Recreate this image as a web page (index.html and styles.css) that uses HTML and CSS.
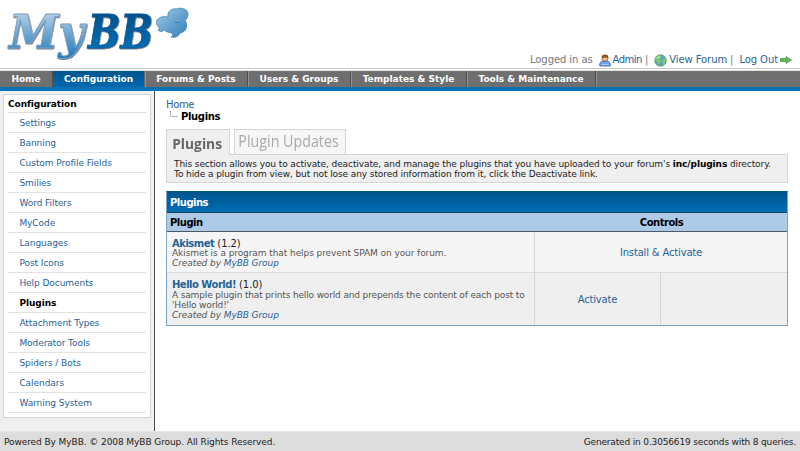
FILE: index.html
```html
<!DOCTYPE html>
<html lang="en">
<head>
<meta charset="utf-8">
<title>Plugins</title>
<link rel="stylesheet" href="styles.css">
</head>
<body>
<header class="header">
  <svg class="logo" width="200" height="68" viewBox="0 0 200 68" role="img" aria-label="MyBB">
    <defs>
      <linearGradient id="light" gradientUnits="userSpaceOnUse" x1="0" y1="13" x2="0" y2="58"><stop offset="0" stop-color="#b5cfe7"/><stop offset="1" stop-color="#1b78be"/></linearGradient>
      <linearGradient id="dark" gradientUnits="userSpaceOnUse" x1="0" y1="13" x2="0" y2="49"><stop offset="0" stop-color="#00508a"/><stop offset="1" stop-color="#0070b8"/></linearGradient>
      <linearGradient id="bubble" x1="0" y1="0" x2="1" y2="1"><stop offset="0" stop-color="#a5cbe8"/><stop offset="1" stop-color="#2f7cb8"/></linearGradient>
      <filter id="shadow" x="-20%" y="-20%" width="140%" height="150%"><feDropShadow dx=".6" dy=".8" stdDeviation=".6" flood-color="#345" flood-opacity=".85"/></filter>
    </defs>
    <g class="logo-text" filter="url(#shadow)">
      <text x="9" y="48" textLength="75" lengthAdjust="spacingAndGlyphs" fill="url(#light)" stroke="#7fa3c2">My</text>
      <text x="88" y="48" textLength="65" lengthAdjust="spacingAndGlyphs" fill="url(#dark)" stroke="#0a5a96">BB</text>
    </g>
    <path d="M168 17C167 11 172 8 177 9C181 7 188 9 188 14C188 17 187 19 185 20C188 25 187 32 180 33C178 37 175 38 171 37C173 36 173 35 172 33C168 33 166 31 164 30C162 32 160 32 158 30C160 29 159 28 158 26C154 22 158 15 168 17Z" fill="url(#bubble)" stroke="#3d85b8" stroke-width=".8"/>
    <path d="M175 22q3 1.500 5 0" fill="none" stroke="#2c70a3" stroke-width=".8"/>
  </svg>
  <div class="welcome">
    <span class="who">Logged in as</span>
    <svg class="user" width="12" height="13" viewBox="0 0 12 13"><path d="M.8 12Q0 8 4 7H8Q12 8 11.200 12Z" fill="#6ba4f0" stroke="#315fb5" stroke-width=".8"/><path d="M2.500 10.500h7" stroke="#a9cdfa"/><circle cx="6" cy="4.300" r="3" fill="#f3b983" stroke="#8c5122" stroke-width=".7"/><path d="M2.800 4.300Q2 .6 6 .5T9.200 4.300Q7 2.500 2.800 4.300" fill="#8c5122"/></svg>
    <a class="admin">Admin</a><span class="bar">|</span>
    <svg class="globe" width="13" height="13" viewBox="0 0 13 13"><circle cx="6.500" cy="6.500" r="5.700" fill="#5b9fd0" stroke="#58a45a"/><path d="M2 3Q5 0 8 2L6 5 7 7 5 11 3 8 1 6ZM9 5l3-1-1 5-2 2-1-3Z" fill="#7ccb72"/><path d="M3 4l3-1.500" stroke="#dff4d9"/></svg>
    <a class="view">View Forum</a><span class="bar">|</span>
    <a class="out">Log Out</a>
    <svg class="arrow" width="12" height="8" viewBox="0 0 12 8"><path d="M.5 2.500H6V.5L11.500 4 6 7.500V5.500H.5Z" fill="#65b75b" stroke="#3e8842" stroke-width=".7"/></svg>
  </div>
</header>
<nav class="menu">
  <a class="m1">Home</a><a class="m2 active">Configuration</a><a class="m3">Forums &amp; Posts</a><a class="m4">Users &amp; Groups</a><a class="m5">Templates &amp; Style</a><a class="m6">Tools &amp; Maintenance</a>
</nav>
<div class="page">
  <aside class="side">
    <div class="sidebox">
      <h2>Configuration</h2>
      <ul>
        <li>Settings</li><li>Banning</li><li>Custom Profile Fields</li><li>Smilies</li><li>Word Filters</li><li>MyCode</li><li>Languages</li><li>Post Icons</li><li>Help Documents</li><li class="current">Plugins</li><li>Attachment Types</li><li>Moderator Tools</li><li>Spiders / Bots</li><li>Calendars</li><li>Warning System</li>
      </ul>
    </div>
  </aside>
  <main class="content">
    <div class="crumb"><a>Home</a></div>
    <div class="crumb here"><svg width="8" height="8" viewBox="0 0 8 8"><path d="M.5 0V5.500H8" fill="none" stroke="#888" stroke-dasharray="1 .6"/></svg><b>Plugins</b></div>
    <div class="tabs"><span class="tab on"><span>Plugins</span></span><span class="tab off"><span>Plugin Updates</span></span></div>
    <div class="intro"><p>This section allows you to activate, deactivate, and manage the plugins that you have uploaded to your forum's <b>inc/plugins</b> directory.</p><p class="second">To hide a plugin from view, but not lose any stored information from it, click the Deactivate link.</p></div>
    <section class="table">
      <h3>Plugins</h3>
      <div class="row head"><b>Plugin</b><b class="controls">Controls</b></div>
      <div class="row first">
        <div class="cell"><div class="name"><a>Akismet</a> (1.2)</div><p>Akismet is a program that helps prevent SPAM on your forum.</p><p class="by">Created by <a>MyBB Group</a></p></div>
        <div class="action wide"><a>Install &amp; Activate</a></div>
      </div>
      <div class="row last">
        <div class="cell"><div class="name"><a>Hello World!</a> (1.0)</div><p class="long">A sample plugin that prints hello world and prepends the content of each post to<br>'Hello world!'</p><p class="by">Created by <a>MyBB Group</a></p></div>
        <div class="action"><a>Activate</a></div><div class="action"></div>
      </div>
    </section>
  </main>
</div>
<footer class="footer"><span>Powered By MyBB. © 2008 MyBB Group. All Rights Reserved.</span><span class="gen">Generated in 0.3056619 seconds with 8 queries.</span></footer>
</body>
</html>
```
FILE: styles.css
```css
* { box-sizing: border-box; }
body { margin: 0; width: 800px; height: 451px; overflow: hidden; display: flex; flex-direction: column; background: #fff; color: #222; font: 9px/10px Verdana, "DejaVu Sans", sans-serif; letter-spacing: -.08px; white-space: nowrap; }
h2, h3, p, ul { margin: 0; padding: 0; }
a { color: #1f6398; }
.header { height: 71px; flex: none; display: flex; justify-content: space-between; border-bottom: 1px solid #e4e4e4; background: linear-gradient(#ccc, #ccc) 0 68px / 100% 1px no-repeat; }
.logo-text { font: italic bold 47px "DejaVu Serif", serif; letter-spacing: 0; stroke-width: .9px; }
.welcome { display: flex; align-items: center; height: 14px; margin: 53px 8px 0 0; font-size: 10px; line-height: 14px; color: #777; }
.welcome svg { flex: none; }
.user { margin-left: 6px; }
.admin { margin-left: 2px; letter-spacing: -.5px; }
.bar { margin-left: 3px; }
.globe { margin-left: 6px; }
.view { margin-left: 2px; }
.out { margin-left: 6px; }
.arrow { margin-left: 2px; }
.menu { height: 20px; flex: none; display: flex; background: #6f6f6f; border-bottom: 4px solid #0c70b4; letter-spacing: 0; }
.menu a { height: 16px; line-height: 17px; text-align: center; color: #fff; font-weight: bold; border-right: 1px solid #4d4d4d; box-shadow: 1px 0 #929292; }
.menu .active { background: linear-gradient(#00558c, #0069b0); border-right-color: #666; }
.m1 { width: 53px; } .m2 { width: 92px; } .m3 { width: 103px; } .m4 { width: 103px; } .m5 { width: 116px; } .m6 { width: 129px; }
.page { height: 340px; flex: none; display: flex; }
.side { width: 155px; padding: 3px; background: #efefef; border-right: 1px solid #4b4b4b; }
.sidebox { width: 148px; height: 324px; padding: 0 4px; background: #fff; border: 1px solid #d5d5d5; }
.sidebox h2 { height: 18px; font-size: 9px; line-height: 19px; color: #000; border-bottom: 1px solid #ddd; }
.sidebox ul { list-style: none; letter-spacing: -.06px; }
.sidebox li { height: 20px; padding-left: 11.4px; line-height: 20px; border-bottom: 1px solid #e3e3e3; color: #1f6398; }
.sidebox .current { font-weight: bold; color: #000; }
.content { width: 645px; padding: 8px 12px 0 11px; }
.crumb { height: 12px; font-size: 10px; line-height: 12px; letter-spacing: -.35px; color: #000; }
.here { display: flex; height: 11px; line-height: 11px; padding-left: 4px; }
.here b { margin-left: 3px; }
.tabs { display: flex; gap: 4px; height: 25px; margin-top: 7px; font-family: "Open Sans", sans-serif; letter-spacing: 0; }
.tab { border: 1px solid #d5d5d5; border-bottom: 0; text-align: center; }
.tab span { display: inline-block; transform: scaleX(.92); margin: 0 -5px 0 -7px; }
.on { width: 64px; height: 26px; background: #efefef; color: #666; font-size: 15px; line-height: 27px; font-weight: bold; position: relative; }
.off { width: 112px; background: #f6f6f6; color: #aaa; font-size: 15.5px; line-height: 23px; }
.intro { height: 29px; padding: 4px 7px; background: #efefef; border: 1px solid #d5d5d5; letter-spacing: -.09px; }
.intro b { color: #000; }
.table { margin-top: 8px; height: 135px; border: 1px solid #7fa5c3; border-top-color: #00558c; }
.table h3 { height: 21px; padding-left: 3px; font-size: 10px; line-height: 21px; letter-spacing: -.5px; color: #fff; background: linear-gradient(#00558c, #006cb4); border-bottom: 1px solid #123e60; }
.row { display: grid; grid-template-columns: 367px 126px 127px; }
.head { height: 19px; padding-left: 3px; grid-template-columns: 366px 251px; font-size: 10px; line-height: 19px; letter-spacing: -.5px; color: #000; background: #adcbe7; border-bottom: 1px solid #4f5965; }
.controls { text-align: center; }
.first { height: 41px; background: #f5f5f5; border-bottom: 1px solid #d8d8d8; }
.last { height: 52px; background: #efefef; }
.cell { padding: 6px 0 0 5px; color: #555; }
.long { letter-spacing: -.15px; }
.name { height: 10px; font-size: 10px; line-height: 11px; letter-spacing: -.1px; color: #222; }
.last .name { height: 11px; line-height: 12px; }
.name a { font-weight: bold; letter-spacing: -.5px; }
.by { font-style: italic; }
.action { display: flex; align-items: center; justify-content: center; padding-top: 2px; border-left: 1px solid #d5d5d5; font-size: 10px; letter-spacing: -.17px; }
.wide { grid-column: span 2; }
.footer { height: 20px; flex: none; display: flex; justify-content: space-between; padding: 0 4px; background: #ddd; border-top: 1px solid #e6e6e6; line-height: 21px; }
.gen { letter-spacing: -.16px; }
```
